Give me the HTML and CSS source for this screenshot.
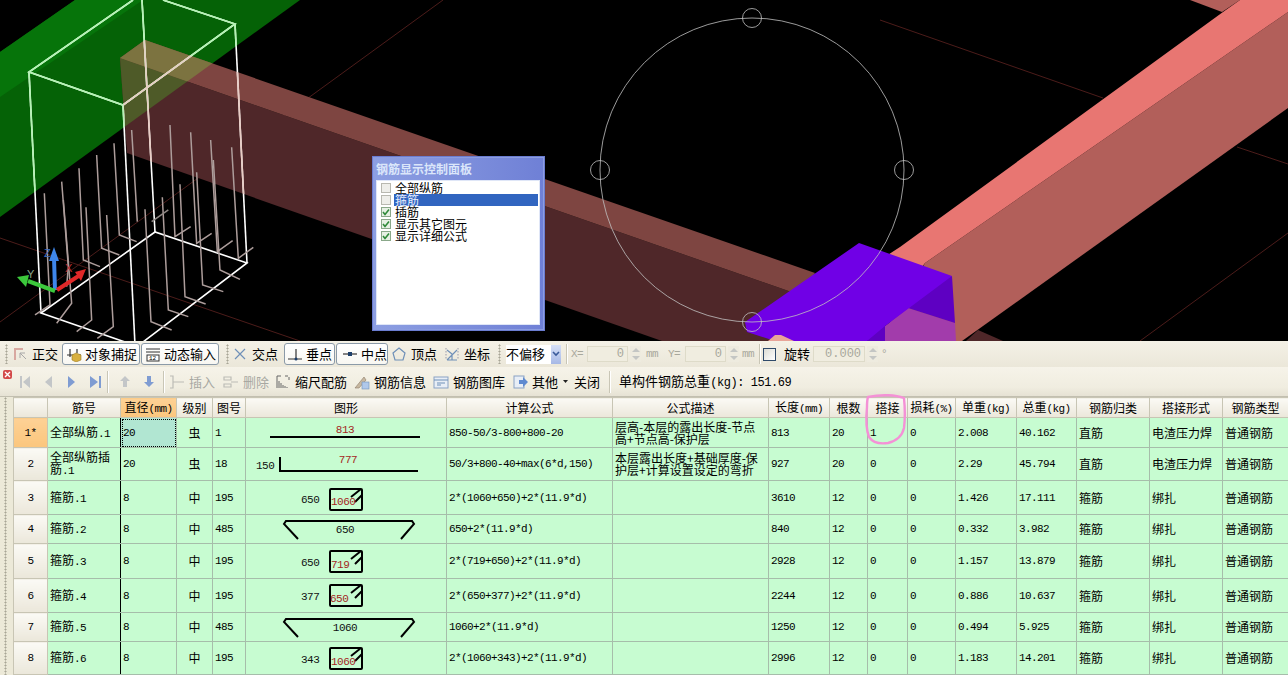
FILE: index.html
```html
<!DOCTYPE html>
<html lang="zh">
<head>
<meta charset="utf-8">
<title>钢筋显示控制面板</title>
<link rel="stylesheet" href="styles.css">
</head>
<body>
<div class="app">
  <section class="viewport">
    <svg class="scene" width="1288" height="341" viewBox="0 0 1288 341">
      <defs>
        <clipPath id="clipGreen"><polygon points="0,52 75,0 300,0 0,217"/></clipPath>
        <clipPath id="clipRed"><polygon points="120,58 145,40 815,273 800,341 662,341 127,153"/></clipPath>
        <g id="wire">
          <polyline points="133,0 29,72 123,105 235,24 163,0"/>
          <line x1="29" y1="72" x2="41" y2="313"/>
          <line x1="123" y1="105" x2="135" y2="345"/>
          <line x1="235" y1="24" x2="247" y2="263"/>
          <line x1="142" y1="0" x2="155" y2="232"/>
          <polyline points="125,342 41,313 155,232 247,263 143,342"/>
        </g>
      </defs>
      <g class="grid">
        <line x1="443" y1="0" x2="0" y2="322"/>
        <line x1="0" y1="238" x2="300" y2="341"/>
        <line x1="880" y1="20" x2="1103" y2="98"/>
        <line x1="1237" y1="147" x2="1288" y2="164"/>
        <line x1="1288" y1="233" x2="1140" y2="341"/>
      </g>
      <polygon class="g-side" points="0,52 75,0 300,0 0,217"/>
      <polygon class="g-top" points="0,52 75,0 143,0 0,97"/>
      <polygon class="r-side" points="120,58 800,295 800,341 662,341 127,153"/>
      <polygon class="r-top" points="120,58 145,40 815,273 800,295"/>
      <g clip-path="url(#clipGreen)">
        <polygon class="o-side" points="120,58 800,295 800,341 662,341 127,153"/>
        <polygon class="o-top" points="120,58 145,40 815,273 800,295"/>
      </g>
      <polygon class="r-side" points="978,330 1003,341 966,341"/>
      <polygon class="p-side" points="1190,0 1222,12 1240,0"/>
      <polygon class="p-side" points="925,263 1288,12 1288,108 962,341 880,341"/>
      <polygon class="p-top" points="880,260 900,247 1223,12 1240,0 1288,0 1288,12 925,263 905,290"/>
      <polygon class="v-mag" points="908,308 955,323 956,341 885,341 885,326"/>
      <polygon class="v-dark" points="952,276 955,323 908,308 885,326 885,341 867,341 880,300"/>
      <polygon class="v-top" points="859,243 952,276 885,326 867,341 775,341 747,332 745,322"/>
      <polygon class="pk-bit" points="775,335 781,335 794,341 768,341"/>
      <use href="#wire" class="wire"/>
      <g clip-path="url(#clipGreen)"><use href="#wire" class="wire-g"/></g>
      <g clip-path="url(#clipRed)"><use href="#wire" class="wire-r"/></g>
      <g class="rebar" transform="scale(.3333)">
        <polyline points="133,580 150,915 105,945"/>
        <polyline points="190,600 215,910 170,970"/>
        <polyline points="258,622 275,960 230,995"/>
        <polyline points="320,645 340,980 292,1015"/>
        <polyline points="185,545 205,800 200,860"/>
        <polyline points="237,505 250,780 300,800"/>
        <polyline points="290,465 305,745 358,765"/>
        <polyline points="342,430 358,705 410,725"/>
        <polyline points="395,390 412,665"/>
        <polyline points="510,375 525,710 572,680"/>
        <polyline points="572,397 590,730 635,700"/>
        <polyline points="632,420 652,755 698,722"/>
        <polyline points="695,442 715,775 760,742"/>
        <polyline points="640,480 660,810 720,838"/>
        <polyline points="590,517 608,855 670,875"/>
        <polyline points="540,553 555,890 617,912"/>
        <polyline points="487,592 505,930 565,950"/>
        <polyline points="435,628 453,965 515,990"/>
        <polyline points="455,665 505,630"/>
      </g>
      <g class="axes">
        <line class="ax-z" x1="55" y1="290" x2="54" y2="258"/>
        <polygon class="ax-zf" points="54,247 49,261 59,261"/>
        <line class="ax-y" x1="55" y1="291" x2="28" y2="281"/>
        <polygon class="ax-yf" points="17,277 29,275 26,287"/>
        <line class="ax-x" x1="57" y1="290" x2="80" y2="275"/>
        <polygon class="ax-xf" points="86,269 75,272 81,281"/>
        <text class="ax-t ax-tz" x="44" y="257">Z</text>
        <text class="ax-t ax-ty" x="27" y="278">Y</text>
        <text class="ax-t ax-tx" x="65" y="272">X</text>
      </g>
      <g class="ctrl">
        <circle cx="752" cy="170" r="152"/>
        <circle cx="752" cy="18" r="9.5"/>
        <circle cx="600" cy="170" r="9.5"/>
        <circle cx="904" cy="170" r="9.5"/>
        <circle cx="752" cy="322" r="9.5"/>
      </g>
    </svg>
    <div class="panel">
      <div class="panel-title">钢筋显示控制面板</div>
      <ul class="panel-list">
        <li class="opt"><span class="check"></span><span class="opt-label">全部纵筋</span></li>
        <li class="opt"><span class="check"></span><span class="opt-label is-selected">箍筋</span></li>
        <li class="opt"><span class="check is-on"><svg width="10" height="10" viewBox="0 0 10 10"><path d="M2 5l2 2.5L8 2.5"/></svg></span><span class="opt-label">插筋</span></li>
        <li class="opt"><span class="check is-on"><svg width="10" height="10" viewBox="0 0 10 10"><path d="M2 5l2 2.5L8 2.5"/></svg></span><span class="opt-label">显示其它图元</span></li>
        <li class="opt"><span class="check is-on"><svg width="10" height="10" viewBox="0 0 10 10"><path d="M2 5l2 2.5L8 2.5"/></svg></span><span class="opt-label">显示详细公式</span></li>
      </ul>
    </div>
  </section>

  <div class="bar bar-snap">
    <span class="grip"></span>
    <span class="tool ml4"><svg class="ico" viewBox="0 0 16 16"><path class="i-faint" d="M2 3h9M3 3v11" /><path class="i-faintb" d="M8 7l6 6M8 7v5M8 7h5"/></svg>正交</span>
    <span class="tool btn ml4 w78"><svg class="ico" viewBox="0 0 16 16"><path class="i-dark" d="M1 9h14M4 3v8M11 3v4"/><path class="i-cube" d="M6 9l4-2 5 2v5l-5 2-4-2z"/></svg>对象捕捉</span>
    <span class="tool btn ml1 w78"><svg class="ico" viewBox="0 0 16 16"><path class="i-dark" d="M1 3h14M1 6h14"/><rect class="i-box" x="2" y="9" width="12" height="6"/><text class="i-num" x="4" y="14">12</text></svg>动态输入</span>
    <span class="grip ml7"></span>
    <span class="tool ml3"><svg class="ico" viewBox="0 0 16 16"><path class="i-blue" d="M3 3l10 10M13 3L3 13"/></svg>交点</span>
    <span class="tool btn tight ml6 w51"><svg class="ico" viewBox="0 0 16 16"><path class="i-dark" d="M1 13h14M9 3v10"/><circle class="i-dot" cx="9" cy="13" r="1.5"/></svg>垂点</span>
    <span class="tool btn roomy ml1 w52"><svg class="ico" viewBox="0 0 16 16"><path class="i-dark" d="M1 8h14"/><rect class="i-dot" x="6" y="6" width="4" height="4"/></svg>中点</span>
    <span class="tool ml3"><svg class="ico" viewBox="0 0 16 16"><path class="i-blue" d="M8 2l6 5-2 7H4L2 7z"/></svg>顶点</span>
    <span class="tool ml7"><svg class="ico" viewBox="0 0 16 16"><path class="i-blue" d="M3 14L13 4M8 8v6M8 8L3 4M13 14H3"/><path class="i-dash" d="M2 2v12M14 2v12"/></svg>坐标</span>
    <span class="grip ml8"></span>
    <span class="select ml5"><span class="select-val">不偏移</span><span class="select-btn"><svg width="8" height="6" viewBox="0 0 8 6"><path d="M1 1l3 3 3-3"/></svg></span></span>
    <span class="vsep ml5"></span>
    <span class="mute ml4 w13">X=</span>
    <span class="field ml3 w41">0</span>
    <span class="spin ml2"><i class="up"></i><i class="dn"></i></span>
    <span class="mute ml5 w14">mm</span>
    <span class="mute ml8 w13">Y=</span>
    <span class="field ml4 w41">0</span>
    <span class="spin ml2"><i class="up"></i><i class="dn"></i></span>
    <span class="mute ml3 w14">mm</span>
    <span class="vsep ml3"></span>
    <span class="box ml3"></span>
    <span class="label ml8">旋转</span>
    <span class="field ml3 w52">0.000</span>
    <span class="spin ml2"><i class="up"></i><i class="dn"></i></span>
    <span class="mute ml3">°</span>
  </div>

  <div class="bar bar-data">
    <span class="closer"><svg width="9" height="9" viewBox="0 0 9 9"><path d="M2 2l5 5M7 2L2 7"/></svg></span>
    <span class="nav ml8"><svg width="10" height="12" viewBox="0 0 10 12"><path class="n-off" d="M0 0h2v12H0zM10 0v12L3 6z"/></svg></span>
    <span class="nav ml15"><svg width="7" height="12" viewBox="0 0 7 12"><path class="n-off" d="M7 0v12L0 6z"/></svg></span>
    <span class="nav ml16"><svg width="7" height="12" viewBox="0 0 7 12"><path class="n-on" d="M0 0v12l7-6z"/></svg></span>
    <span class="nav ml15"><svg width="11" height="12" viewBox="0 0 11 12"><path class="n-on" d="M0 0v12l8-6zM9 0h2v12H9z"/></svg></span>
    <span class="vsep ml6 h22"></span>
    <span class="nav ml12"><svg width="10" height="11" viewBox="0 0 10 11"><path class="n-off" d="M5 0l5 5H7v6H3V5H0z"/></svg></span>
    <span class="nav ml14"><svg width="10" height="11" viewBox="0 0 10 11"><path class="n-on" d="M5 11L0 6h3V0h4v6h3z"/></svg></span>
    <span class="vsep ml9 h22"></span>
    <span class="tool off ml5"><svg class="ico" viewBox="0 0 16 16"><path class="i-gray" d="M1 2h3v12H1M4 8h11"/></svg>插入</span>
    <span class="tool off ml8"><svg class="ico" viewBox="0 0 16 16"><path class="i-gray" d="M1 3h7v3H1zM1 10h7v3H1zM8 8h7"/></svg>删除</span>
    <span class="tool ml6"><svg class="ico" viewBox="0 0 16 16"><path class="i-hatch" d="M2 2v12M4 7v7M6 9v5M8 11v3M10 12v2M12 13v1M2 2h4M10 2h3M14 3v3"/></svg>缩尺配筋</span>
    <span class="tool ml7"><svg class="ico" viewBox="0 0 16 16"><path class="i-tan" d="M1 14L10 3l2 3-7 8z"/><rect class="i-bluefill" x="8" y="8" width="7" height="7"/></svg>钢筋信息</span>
    <span class="tool ml7"><svg class="ico" viewBox="0 0 16 16"><rect class="i-panel" x="1" y="3" width="14" height="11"/><path class="i-blue" d="M1 6h14M4 9h8M4 11h4"/></svg>钢筋图库</span>
    <span class="tool ml7"><svg class="ico" viewBox="0 0 16 16"><rect class="i-panel" x="2" y="2" width="10" height="12"/><path class="i-arrow" d="M7 6h4V3l5 5-5 5v-3H7z"/></svg>其他<svg class="caret" width="5" height="3" viewBox="0 0 5 3"><path d="M0 0h5L2.500 3z"/></svg></span>
    <span class="label ml6">关闭</span>
    <span class="vsep ml9 h22"></span>
    <span class="label ml9">单构件钢筋总重<span class="latin">(kg): 151.69</span></span>
  </div>

  <div class="main">
    <div class="gutter"><span class="gutter-grip"></span></div>
    <div class="grid-wrap">
      <table class="rebars">
        <colgroup>
          <col class="c-head"><col class="c-name"><col class="c-dia"><col class="c-lvl"><col class="c-fig"><col class="c-shape"><col class="c-calc"><col class="c-desc"><col class="c-len"><col class="c-cnt"><col class="c-lap"><col class="c-loss"><col class="c-unit"><col class="c-total"><col class="c-cat"><col class="c-form"><col class="c-type">
        </colgroup>
        <thead>
          <tr class="r0">
            <th></th><th>筋号</th><th class="is-active">直径<span class="n">(mm)</span></th><th>级别</th><th>图号</th><th>图形</th><th>计算公式</th><th>公式描述</th><th>长度<span class="n">(mm)</span></th><th>根数</th><th>搭接</th><th>损耗<span class="n">(%)</span></th><th>单重<span class="n">(kg)</span></th><th>总重<span class="n">(kg)</span></th><th>钢筋归类</th><th>搭接形式</th><th>钢筋类型</th>
          </tr>
        </thead>
        <tbody>
          <tr class="r1">
            <th class="is-active n">1*</th><td class="freeze">全部纵筋<span class="n">.1</span></td><td class="num is-current">20</td><td class="ctr">虫</td><td class="num">1</td>
            <td class="shape"><svg width="200" height="29"><line class="bar-line" x1="24" y1="19" x2="174" y2="19"/><text class="dim red" x="99" y="15" text-anchor="middle">813</text></svg></td>
            <td class="num">850-50/3-800+800-20</td><td class="desc">层高-本层的露出长度-节点<br>高+节点高-保护层</td><td class="num">813</td><td class="num">20</td><td class="num">1</td><td class="num">0</td><td class="num">2.008</td><td class="num">40.162</td><td>直筋</td><td>电渣压力焊</td><td>普通钢筋</td>
          </tr>
          <tr class="r2">
            <th class="n">2</th><td class="freeze desc">全部纵筋插<br>筋<span class="n">.1</span></td><td class="num">20</td><td class="ctr">虫</td><td class="num">18</td>
            <td class="shape"><svg width="200" height="32"><path class="bar-line" d="M34 9v14h138"/><text class="dim" x="10" y="21">150</text><text class="dim red" x="102" y="15" text-anchor="middle">777</text></svg></td>
            <td class="num">50/3+800-40+max(6*d,150)</td><td class="desc">本层露出长度+基础厚度-保<br>护层+计算设置设定的弯折</td><td class="num">927</td><td class="num">20</td><td class="num">0</td><td class="num">0</td><td class="num">2.29</td><td class="num">45.794</td><td>直筋</td><td>电渣压力焊</td><td>普通钢筋</td>
          </tr>
          <tr class="r3">
            <th class="n">3</th><td class="freeze">箍筋<span class="n">.1</span></td><td class="num">8</td><td class="ctr">中</td><td class="num">195</td>
            <td class="shape"><svg width="200" height="33"><use href="#stir" x="83" y="7"/><text class="dim" x="55" y="22">650</text><text class="dim red" x="85" y="24">1060</text></svg></td>
            <td class="num">2*(1060+650)+2*(11.9*d)</td><td></td><td class="num">3610</td><td class="num">12</td><td class="num">0</td><td class="num">0</td><td class="num">1.426</td><td class="num">17.111</td><td>箍筋</td><td>绑扎</td><td>普通钢筋</td>
          </tr>
          <tr class="r4">
            <th class="n">4</th><td class="freeze">箍筋<span class="n">.2</span></td><td class="num">8</td><td class="ctr">中</td><td class="num">485</td>
            <td class="shape"><svg width="200" height="28"><path class="bar-line" d="M52 24L38 9l2-3h126l2 3-13 15"/><text class="dim" x="99" y="18" text-anchor="middle">650</text></svg></td>
            <td class="num">650+2*(11.9*d)</td><td></td><td class="num">840</td><td class="num">12</td><td class="num">0</td><td class="num">0</td><td class="num">0.332</td><td class="num">3.982</td><td>箍筋</td><td>绑扎</td><td>普通钢筋</td>
          </tr>
          <tr class="r5">
            <th class="n">5</th><td class="freeze">箍筋<span class="n">.3</span></td><td class="num">8</td><td class="ctr">中</td><td class="num">195</td>
            <td class="shape"><svg width="200" height="34"><use href="#stir" x="83" y="6"/><text class="dim" x="55" y="22">650</text><text class="dim red" x="85" y="24">719</text></svg></td>
            <td class="num">2*(719+650)+2*(11.9*d)</td><td></td><td class="num">2928</td><td class="num">12</td><td class="num">0</td><td class="num">0</td><td class="num">1.157</td><td class="num">13.879</td><td>箍筋</td><td>绑扎</td><td>普通钢筋</td>
          </tr>
          <tr class="r6">
            <th class="n">6</th><td class="freeze">箍筋<span class="n">.4</span></td><td class="num">8</td><td class="ctr">中</td><td class="num">195</td>
            <td class="shape"><svg width="200" height="33"><use href="#stir" x="83" y="5"/><text class="dim" x="55" y="21">377</text><text class="dim red" x="84" y="23">650</text></svg></td>
            <td class="num">2*(650+377)+2*(11.9*d)</td><td></td><td class="num">2244</td><td class="num">12</td><td class="num">0</td><td class="num">0</td><td class="num">0.886</td><td class="num">10.637</td><td>箍筋</td><td>绑扎</td><td>普通钢筋</td>
          </tr>
          <tr class="r7">
            <th class="n">7</th><td class="freeze">箍筋<span class="n">.5</span></td><td class="num">8</td><td class="ctr">中</td><td class="num">485</td>
            <td class="shape"><svg width="200" height="28"><path class="bar-line" d="M52 24L38 9l2-3h126l2 3-13 15"/><text class="dim" x="99" y="18" text-anchor="middle">1060</text></svg></td>
            <td class="num">1060+2*(11.9*d)</td><td></td><td class="num">1250</td><td class="num">12</td><td class="num">0</td><td class="num">0</td><td class="num">0.494</td><td class="num">5.925</td><td>箍筋</td><td>绑扎</td><td>普通钢筋</td>
          </tr>
          <tr class="r8">
            <th class="n">8</th><td class="freeze">箍筋<span class="n">.6</span></td><td class="num">8</td><td class="ctr">中</td><td class="num">195</td>
            <td class="shape"><svg width="200" height="32"><use href="#stir" x="83" y="5"/><text class="dim" x="55" y="21">343</text><text class="dim red" x="85" y="23">1060</text></svg></td>
            <td class="num">2*(1060+343)+2*(11.9*d)</td><td></td><td class="num">2996</td><td class="num">12</td><td class="num">0</td><td class="num">0</td><td class="num">1.183</td><td class="num">14.201</td><td>箍筋</td><td>绑扎</td><td>普通钢筋</td>
          </tr>
        </tbody>
      </table>
    </div>
  </div>

  <svg class="scribble" width="60" height="70" viewBox="0 0 60 70">
    <path d="M8 5C22 2 36 3 44 6c1 10 1 22 0 30-2 9-8 13-16 15-7 1-15 0-19-6-3-8-3-20-2-30 0-4 0-7 1-10"/>
  </svg>
  <svg class="defs" width="0" height="0">
    <symbol id="stir" width="34" height="23" viewBox="0 0 34 23" overflow="visible">
      <rect class="bar-line" x="1" y="1" width="32" height="21" rx="1"/>
      <path class="bar-line" d="M22 9l10-8M26 14l7-7"/>
    </symbol>
  </svg>
</div>
</body>
</html>
```

FILE: styles.css
```css
* { box-sizing: border-box; }
html, body { margin: 0; padding: 0; background: #ece9d8; }
body { width: 1288px; height: 675px; overflow: hidden; font-family: "Noto Sans CJK SC", "Liberation Sans", sans-serif; font-size: 12px; color: #000; }
.app { position: relative; width: 1288px; height: 675px; overflow: hidden; display: flex; flex-direction: column; }
ul { margin: 0; padding: 0; list-style: none; }

/* 3D viewport */
.viewport { position: relative; height: 341px; background: #000; flex: none; }
.scene { display: block; }
.grid line { stroke: #4c1c1a; stroke-width: 1; }
.g-top { fill: #06740a; }
.g-side { fill: #056206; }
.r-top { fill: #7e4541; }
.r-side { fill: #4f2729; }
.o-top { fill: #7c7340; }
.o-side { fill: #4e5a28; }
.p-top { fill: #e87672; }
.p-side { fill: #b25f5a; }
.v-top { fill: #7000e6; }
.v-dark { fill: #5e00c2; }
.v-mag { fill: #a23cab; }
.pk-bit { fill: #e8a498; }
.wire { stroke: #fff; stroke-width: 1.6; fill: none; }
.wire-g { stroke: #b4f4b4; stroke-width: 1.6; fill: none; }
.wire-r { stroke: #e8ccc4; stroke-width: 1.6; fill: none; }
.rebar polyline, .rebar line { stroke: #ad9d9b; stroke-width: 4.5; fill: none; }
.rebar polyline:last-child { stroke: #8f8885; }
.ax-z { stroke: #3e86ea; stroke-width: 4; }
.ax-zf { fill: #3e86ea; }
.ax-y { stroke: #3cc83c; stroke-width: 4; }
.ax-yf { fill: #3cc83c; }
.ax-x { stroke: #e02828; stroke-width: 4; }
.ax-xf { fill: #e02828; }
.ax-t { font-family: "Liberation Sans", sans-serif; font-size: 11px; }
.ax-tz { fill: #3e6ec0; }
.ax-ty { fill: #8ca88c; }
.ax-tx { fill: #c03030; }
.ctrl circle { fill: none; stroke: #c2c2c2; stroke-width: .8; }

/* floating panel */
.panel { position: absolute; left: 372px; top: 156px; width: 173px; height: 175px; padding: 0 4px 5px 3px; background: linear-gradient(90deg, #8d9fe2, #6f80d6); border: 1px solid #6a7cd0; display: flex; flex-direction: column; box-shadow: inset 0 0 0 1px #8c9de0; }
.panel-title { height: 23px; padding: 5px 0 0 0; color: #dbe6fa; font-size: 12px; line-height: 14px; font-weight: 700; white-space: nowrap; }
.panel-list { flex: 1; background: #fff; border: 1px solid #dfe6f7; padding: 1px 1px 0 4px; }
.opt { display: flex; align-items: center; height: 12px; margin-top: 0; line-height: 12px; white-space: nowrap; }
.check { flex: none; width: 10px; height: 10px; background: #eeeeea; border: 1px solid #b8b8b0; display: block; position: relative; }
.check svg { position: absolute; left: -1px; top: -1px; }
.check.is-on { background: #e6f0e4; border-color: #8aa88a; }
.check path { fill: none; stroke: #2f8a3a; stroke-width: 1.6; }
.opt-label { flex: 1; margin-left: 3px; padding-left: 1px; height: 12px; font-size: 12px; }
.is-selected { background: #3165c0; color: #e8eefc; }

/* tool bars */
.bar { display: flex; align-items: center; flex: none; white-space: nowrap; font-size: 13px; line-height: 16px; }
.bar-snap { height: 26px; padding-left: 5px; background: linear-gradient(180deg, #f4f1e6, #ebe7d9); }
.bar-data { height: 30px; padding-left: 3px; background: linear-gradient(180deg, #f6f3e9 0, #f0ede0 70%, #e6e2d4 100%); border-bottom: 1px solid #c2bfb0; }
.ico { width: 16px; height: 16px; margin-right: 4px; flex: none; }
.tool { display: inline-flex; align-items: center; flex: none; }
.btn { height: 22px; padding-left: 3px; border: 1px solid #8b9aa8; border-radius: 3px; background: linear-gradient(180deg, #fff, #f8f7f2); }
.btn .ico { margin-right: 3px; }
.tight { padding-left: 2px; }
.roomy { padding-left: 5px; }
.off { color: #a8a8a2; }
.grip { flex: none; width: 3px; height: 20px; background: radial-gradient(circle, #a8a596 45%, transparent 50%) 0 0 / 3px 3px repeat-y; }
.vsep { flex: none; width: 1px; height: 20px; background: #c9c6b6; box-shadow: 1px 0 0 #fff; }
.h22 { height: 22px; }
.ml1 { margin-left: 1px; } .ml2 { margin-left: 2px; } .ml3 { margin-left: 3px; } .ml4 { margin-left: 4px; } .ml5 { margin-left: 5px; } .ml6 { margin-left: 6px; } .ml7 { margin-left: 7px; } .ml8 { margin-left: 8px; } .ml9 { margin-left: 9px; } .ml10 { margin-left: 10px; } .ml11 { margin-left: 11px; } .ml12 { margin-left: 12px; } .ml14 { margin-left: 14px; } .ml15 { margin-left: 15px; } .ml16 { margin-left: 16px; }
.w13 { width: 13px; } .w14 { width: 14px; } .w41 { width: 41px; } .w51 { width: 51px; } .w52 { width: 52px; } .w78 { width: 78px; }
.select { display: flex; flex: none; width: 55px; height: 19px; background: #fff; }
.select-val { width: 45px; line-height: 17px; font-size: 13px; }
.select-btn { width: 10px; background: linear-gradient(180deg, #d6e0f6, #a6b8e6); display: flex; align-items: center; justify-content: center; }
.select-btn path { fill: none; stroke: #3a5a9a; stroke-width: 1.6; }
.mute { flex: none; color: #a8a89c; font-family: "Liberation Mono", monospace; font-size: 11px; letter-spacing: -.6px; }
.field { flex: none; height: 16px; border: 1px solid #dedbc9; background: #f0ede0; color: #a8a89c; text-align: right; padding-right: 3px; font-family: "Liberation Mono", monospace; font-size: 12px; line-height: 14px; }
.spin { flex: none; width: 11px; height: 16px; display: flex; flex-direction: column; justify-content: space-around; align-items: center; background: #eeebdf; }
.spin i { display: block; width: 0; height: 0; border-left: 4px solid transparent; border-right: 4px solid transparent; }
.spin .up { border-bottom: 4px solid #c4c6c4; }
.spin .dn { border-top: 4px solid #c4c6c4; }
.box { flex: none; width: 13px; height: 13px; background: linear-gradient(135deg, #dcdcd4, #fff); border: 1px solid #2f4a6a; }
.label { flex: none; }
.latin { font-family: "Liberation Mono", monospace; font-size: 12px; letter-spacing: -.45px; }
.closer { flex: none; width: 9px; height: 9px; background: #d34a4a; border-radius: 2px; margin-top: -14px; display: flex; }
.closer path { stroke: #fff; stroke-width: 1.4; }
.nav { flex: none; display: flex; }
.n-off { fill: #c3c6c8; }
.n-on { fill: #7f9cd2; }
.caret { margin-left: 5px; }
.caret path { fill: #222; }

/* icon strokes */
.i-faint { fill: none; stroke: #d8a8a0; stroke-width: 2; }
.i-faintb { fill: none; stroke: #a8a8a8; stroke-width: 1; }
.i-dark { fill: none; stroke: #333; stroke-width: 1.2; }
.i-cube { fill: #d8b040; stroke: #9a7a20; stroke-width: .6; }
.i-box { fill: #fff; stroke: #333; stroke-width: 1; }
.i-num { font-family: "Liberation Mono", monospace; font-size: 6px; fill: #000; }
.i-blue { fill: none; stroke: #6f90b8; stroke-width: 1.2; }
.i-dot { fill: #1d3f6a; }
.i-dash { fill: none; stroke: #99a; stroke-width: 1; stroke-dasharray: 1.500 1.500; }
.i-gray { fill: none; stroke: #bcbcb6; stroke-width: 1.2; }
.i-hatch { fill: none; stroke: #666; stroke-width: 1; }
.i-tan { fill: #c8b8a0; stroke: #8a7a68; stroke-width: .6; }
.i-bluefill { fill: #b0c8ea; stroke: #6f90b8; stroke-width: .6; }
.i-panel { fill: #e8eef6; stroke: #8aa2c4; stroke-width: 1; }
.i-arrow { fill: #5f8ad0; }

/* data grid */
.main { flex: 1; display: flex; min-height: 0; }
.gutter { flex: none; width: 13px; padding-left: 4px; background: #ece9d8; }
.gutter-grip { display: block; width: 3px; height: 100%; background: radial-gradient(circle, #a8a596 45%, transparent 50%) 0 0 / 3px 3px repeat-y; }
.grid-wrap { flex: 1; overflow: hidden; }
.rebars { width: 1275px; table-layout: fixed; border-collapse: collapse; font-size: 12px; line-height: 12px; }
.c-head { width: 34px; } .c-name { width: 73px; } .c-dia { width: 56px; } .c-lvl { width: 36px; } .c-fig { width: 33px; } .c-shape { width: 201px; } .c-calc { width: 166px; } .c-desc { width: 156px; } .c-len { width: 61px; } .c-cnt { width: 38px; } .c-lap { width: 40px; } .c-loss { width: 48px; } .c-unit { width: 61px; } .c-total { width: 60px; } .c-cat { width: 73px; } .c-form { width: 73px; } .c-type { width: 66px; }
.r0 { height: 20px; } .r1 { height: 30px; } .r2 { height: 33px; } .r3 { height: 34px; } .r4 { height: 29px; } .r5 { height: 35px; } .r6 { height: 34px; } .r7 { height: 29px; } .r8 { height: 33px; }
.rebars th, .rebars td { border: 1px solid #a6bdaa; padding: 0 2px; overflow: hidden; white-space: nowrap; font-weight: 400; }
.rebars th { text-align: center; background: linear-gradient(180deg, #fbfaf5, #ebe7da); border-color: #c8c5b4; }
.rebars td { background: #c7fcd1; }
.rebars th.is-active { background: linear-gradient(180deg, #fdd195, #fbc67d); }
.n { font-family: "Liberation Mono", monospace; font-size: 11px; letter-spacing: -.6px; }
.num { font-family: "Liberation Mono", monospace; font-size: 11px; letter-spacing: -.6px; }
.ctr { text-align: center; }
.desc { line-height: 12px; }
.rebars .freeze { border-right: 1px solid #000; }
.rebars .is-current { background: #b1e6d2; outline: 1px dotted #000; outline-offset: -2px; }
.rebars .shape { padding: 0; }
.shape svg { display: block; }
.dim { font-family: "Liberation Mono", monospace; font-size: 11px; letter-spacing: -.5px; fill: #111; }
.red { fill: #a4261e; }
.bar-line { fill: none; stroke: #000; stroke-width: 2; }
.defs { position: absolute; }
.scribble { position: absolute; left: 860px; top: 392px; pointer-events: none; }
.scribble path { fill: none; stroke: #f491d6; stroke-width: 2.4; stroke-linecap: round; }
```
